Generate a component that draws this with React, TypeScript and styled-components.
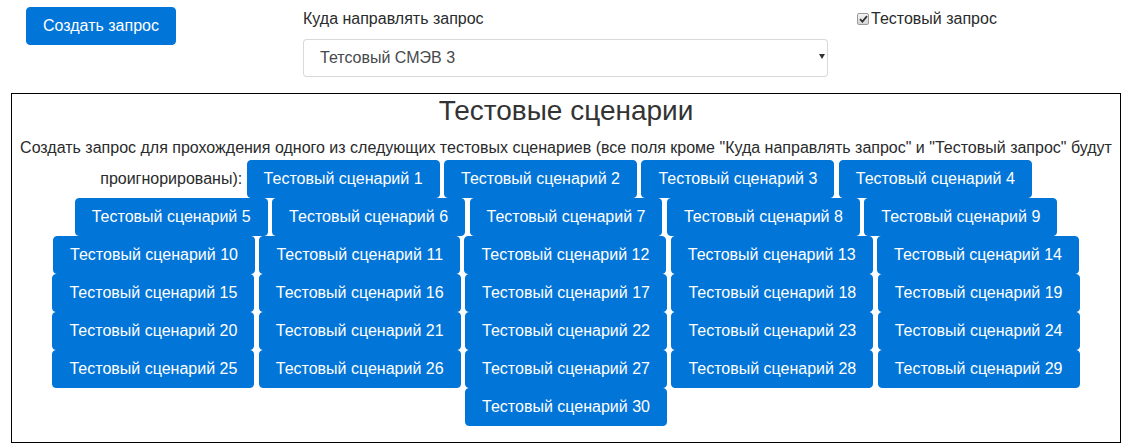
import React from "react";
import styled, { createGlobalStyle } from "styled-components";

const GlobalStyle = createGlobalStyle`
  html, body {
    margin: 0;
    padding: 0;
    background: #fff;
  }
  body {
    font-family: "Liberation Sans", Arial, sans-serif;
    font-size: 16px;
    line-height: 1.5;
    color: #292b2c;
  }
  * { box-sizing: border-box; }
`;

const TopRow = styled.div`
  display: flex;
  align-items: flex-start;
  padding: 7px 0 0 26px;
`;

const ActionCol = styled.div`
  width: 277px;
  flex: none;
`;

const FormGroup = styled.div`
  width: 525px;
  flex: none;
  margin-bottom: 16px;
`;

const FieldLabel = styled.label`
  display: block;
  margin-bottom: 8px;
  color: #292b2c;
`;

const SelectWrap = styled.div`
  position: relative;
`;

const Select = styled.select`
  display: block;
  width: 100%;
  height: 38px;
  padding: 8px 28px 8px 16px;
  font-family: inherit;
  font-size: 16px;
  line-height: 1.25;
  color: #464a4c;
  background: #fff;
  border: 1px solid rgba(0, 0, 0, 0.15);
  border-radius: 4px;
  appearance: none;
  -webkit-appearance: none;
  outline: none;
`;

const SelectArrow = styled.span`
  position: absolute;
  right: 3px;
  top: 15px;
  width: 0;
  height: 0;
  border-left: 3px solid transparent;
  border-right: 3px solid transparent;
  border-top: 5px solid #333;
  pointer-events: none;
`;

const CheckCol = styled.div`
  margin-left: 29px;
`;

const CheckLabel = styled.label`
  display: flex;
  align-items: center;
  color: #292b2c;
  cursor: pointer;
`;

const CheckBox = styled.span`
  display: inline-flex;
  align-items: center;
  justify-content: center;
  width: 12px;
  height: 12px;
  margin-right: 2px;
  border: 1px solid #9a9a9a;
  border-radius: 2px;
  background: linear-gradient(#f4f4f4, #d6d6d6);
`;

const Button = styled.button`
  display: inline-block;
  padding: 8px 16px;
  font-family: inherit;
  font-size: 16px;
  line-height: 1.25;
  font-weight: 400;
  color: #fff;
  background: #0275d8;
  border: 1px solid #0275d8;
  border-radius: 4px;
  vertical-align: baseline;
  white-space: nowrap;
  cursor: pointer;
`;

const ScenarioBox = styled.div`
  margin: 0 10px 0 11px;
  border: 1px solid #000;
  text-align: center;
`;

const Title = styled.h3`
  margin: 0 0 8px;
  font-size: 28px;
  font-weight: 500;
  line-height: 1.2;
  color: #333;
`;

const Description = styled.p`
  margin: 0 0 16px;
  line-height: 1.5;
`;

export default function App() {
  const scenarios = Array.from({ length: 30 }, (_, i) => i + 1);
  return (
    <>
      <GlobalStyle />
      <TopRow>
        <ActionCol>
          <Button type="button">Создать запрос</Button>
        </ActionCol>
        <FormGroup>
          <FieldLabel htmlFor="target">Куда направлять запрос</FieldLabel>
          <SelectWrap>
            <Select id="target" defaultValue="smev3">
              <option value="smev3">Тетсовый СМЭВ 3</option>
            </Select>
            <SelectArrow />
          </SelectWrap>
        </FormGroup>
        <CheckCol>
          <CheckLabel>
            <CheckBox>
              <svg width="9" height="8" viewBox="0 0 9 8">
                <path
                  d="M1 4.2 L3.4 6.6 L8 1.2"
                  fill="none"
                  stroke="#333"
                  strokeWidth="1.8"
                />
              </svg>
            </CheckBox>
            Тестовый запрос
          </CheckLabel>
        </CheckCol>
      </TopRow>
      <ScenarioBox>
        <Title>Тестовые сценарии</Title>
        <Description>
          Создать запрос для прохождения одного из следующих тестовых сценариев (все поля
          кроме "Куда направлять запрос" и "Тестовый запрос" будут проигнорированы):{" "}
          {scenarios.map((n) => (
            <React.Fragment key={n}>
              <Button type="button">Тестовый сценарий {n}</Button>{" "}
            </React.Fragment>
          ))}
        </Description>
      </ScenarioBox>
    </>
  );
}
